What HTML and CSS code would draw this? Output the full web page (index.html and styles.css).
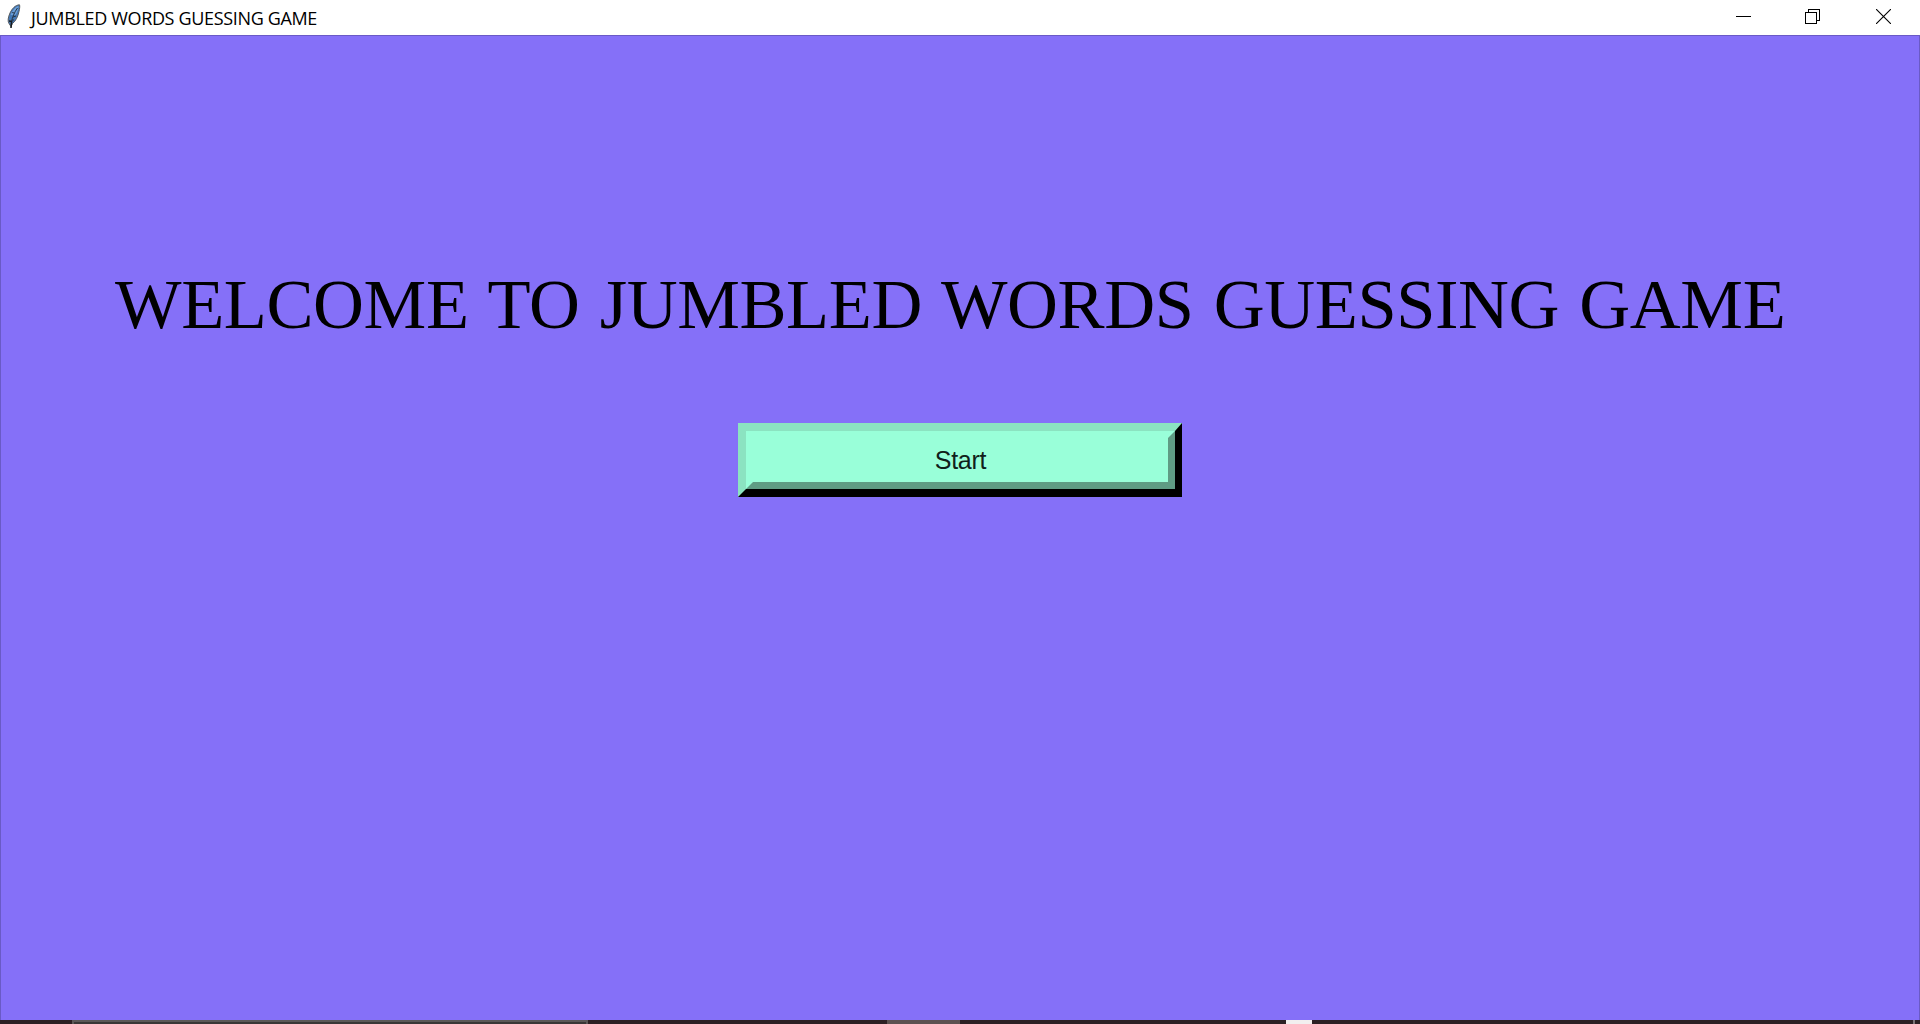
FILE: index.html
```html
<!DOCTYPE html>
<html lang="en">
<head>
<meta charset="utf-8">
<title>JUMBLED WORDS GUESSING GAME</title>
<link rel="stylesheet" href="styles.css">
</head>
<body>
<header class="titlebar">
  <svg class="feather" width="14" height="25" viewBox="0 0 14 25">
    <path d="M12.5 .8C8.5 1 5 4.5 3 9C1 13.5 .5 17 2 19.5L4 22.5L5.5 19.5C9 17 11 12 12 7.500C12.700 4.500 13 2 12.500 .8Z" fill="#4478b5" stroke="#555b60" stroke-width="1"/>
    <path d="M11.500 2C8 3 5 7 3.700 11L8.500 11C10.500 8 11.300 5 11.500 2Z" fill="#6da0d8"/>
    <path d="M10.500 4C7.500 8 5 14 4.500 18M7 9L5.200 8.500M6 13L9 12M5 16L7 16" fill="none" stroke="#263545" stroke-width="1"/>
    <path d="M2 17L4.600 17.500L4 24" fill="none" stroke="#171c20" stroke-width="1.600"/>
  </svg>
  <span class="caption">JUMBLED WORDS GUESSING GAME</span>
  <div class="controls">
    <svg width="15" height="15" viewBox="0 0 15 15" shape-rendering="crispEdges"><path d="M0 7.500H15" stroke="#000"/></svg>
    <svg width="15" height="15" viewBox="0 0 15 15" fill="none" stroke="#000" shape-rendering="crispEdges"><path d="M.5 3.500H11.500V14.500H.5ZM3.500 3.500V.5H14.500V11.500H11.500"/></svg>
    <svg width="15" height="15" viewBox="0 0 15 15"><path d="M0 0L15 15M15 0L0 15" stroke="#000" stroke-width="1.100"/></svg>
  </div>
</header>
<main class="window">
  <h1 class="welcome">WELCOME TO JUMBLED WORDS GUESSING GAME</h1>
  <button class="start"><span class="start-face">Start</span></button>
</main>
<footer class="taskbar">
  <span class="search"></span>
  <span class="active-app"></span>
  <span class="light-app"></span>
  <span class="desktop-edge"></span>
</footer>
</body>
</html>
```

FILE: styles.css
```css
* { box-sizing: border-box; }
body {
  margin: 0;
  height: 1024px;
  display: flex;
  flex-direction: column;
  overflow: hidden;
  background: #fff;
}
.titlebar {
  height: 35px;
  flex: none;
  display: flex;
  align-items: flex-start;
  padding: 4px 29px 0 7px;
}
.feather { flex: none; }
.caption {
  margin-left: 10px;
  font: 18px/28px "Open Sans", "Noto Sans", sans-serif;
  letter-spacing: -0.34px;
  white-space: nowrap;
  color: #000;
}
.controls {
  margin-left: auto;
  margin-top: 5px;
  display: flex;
  gap: 54px;
}
.controls svg { display: block; }
.controls svg:last-child { margin-left: 2px; }
.window {
  flex: 1;
  display: flex;
  flex-direction: column;
  align-items: center;
  background: #8570f8;
  border: 1px solid #6a5ac6;
  border-bottom: 0;
}
.welcome {
  align-self: flex-start;
  margin: 228px 0 0 114px;
  font: 400 70.5px/80px "Liberation Serif", "Times New Roman", serif;
  letter-spacing: -0.4px;
  word-spacing: 3px;
  white-space: nowrap;
  color: #000;
}
.start {
  width: 444px;
  height: 74px;
  margin-top: 79px;
  padding: 0;
  display: flex;
  border-style: solid;
  border-width: 8px 7px 8px 8px;
  border-color: #8be3c1 #000 #000 #8be3c1;
  border-radius: 0;
  background: #99ffd9;
}
.start-face {
  flex: 1;
  align-self: stretch;
  border-style: solid;
  border-width: 7px;
  border-color: #99ffd9 #5f9c84 #5f9c84 #99ffd9;
  font: 25px/44px "Liberation Sans", Arial, sans-serif;
  letter-spacing: -0.3px;
  text-align: center;
  color: #10201a;
}
.taskbar {
  height: 4px;
  flex: none;
  display: grid;
  grid-template-columns: 72px 516px 299px 73px 326px 26px 601px 2px 5px;
  background: #2c2024;
}
.search { grid-column: 2; background: #393737; border: 2px solid #5b5858; border-bottom: 0; }
.active-app { grid-column: 4; background: #5c5252; }
.light-app { grid-column: 6; background: #f2efef; }
.desktop-edge { grid-column: 8; background: #7a7276; }
```
